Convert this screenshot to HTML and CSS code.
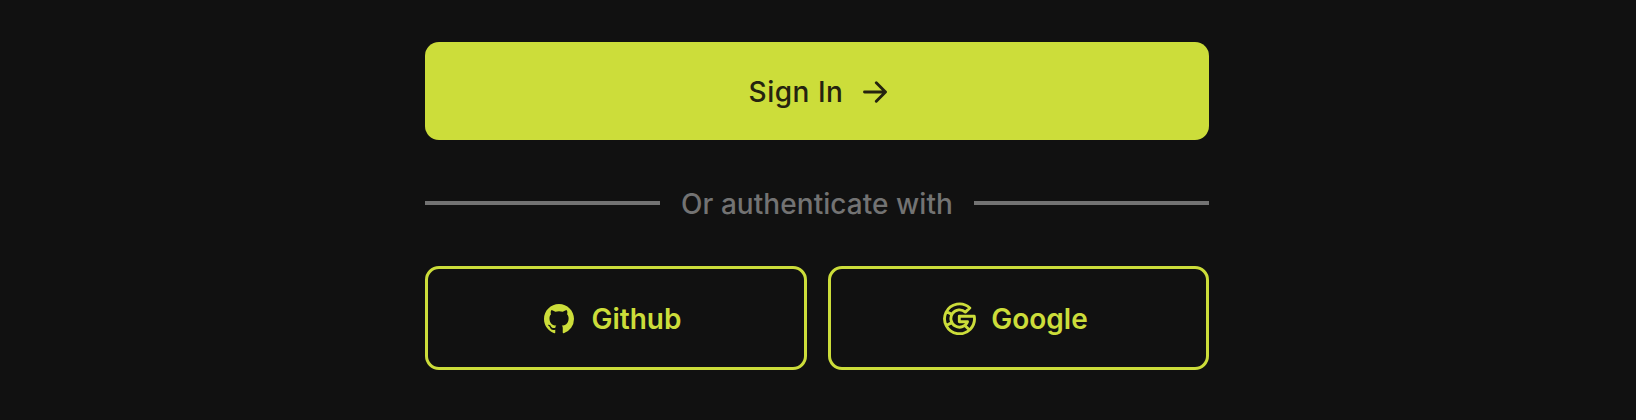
FILE: index.html
```html
<!DOCTYPE html>
<html lang="en">
<head>
<meta charset="utf-8">
<title>Sign In</title>
<link rel="stylesheet" href="styles.css">
</head>
<body>
<main class="auth">
  <button class="btn btn-primary" type="button">
    <span class="label label-signin">Sign In</span>
    <svg class="arrow" viewBox="0 0 24 22" fill="none" stroke="currentColor" stroke-width="2.9" stroke-linecap="round" stroke-linejoin="round"><path d="M1.5 11H22.4M13.3 1.8l9.2 9.2-9.2 9.2"/></svg>
  </button>
  <div class="divider"><span class="label label-divider">Or authenticate with</span></div>
  <div class="providers">
    <button class="btn btn-outline btn-github" type="button">
      <svg class="github" viewBox="0 0 16 16" fill="currentColor"><path d="M8 0C3.58 0 0 3.58 0 8c0 3.54 2.29 6.53 5.47 7.59.4.07.55-.17.55-.38 0-.19-.01-.82-.01-1.49-2.01.37-2.53-.49-2.69-.94-.09-.23-.48-.94-.82-1.13-.28-.15-.68-.52-.01-.53.63-.01 1.08.58 1.23.82.72 1.21 1.87.87 2.33.66.07-.52.28-.87.51-1.07-1.78-.2-3.64-.89-3.64-3.95 0-.87.31-1.59.82-2.15-.08-.2-.36-1.02.08-2.12 0 0 .67-.21 2.2.82.64-.18 1.32-.27 2-.27s1.36.09 2 .27c1.53-1.04 2.2-.82 2.2-.82.44 1.1.16 1.92.08 2.12.51.56.82 1.27.82 2.15 0 3.07-1.87 3.75-3.65 3.95.29.25.54.73.54 1.48 0 1.07-.01 1.93-.01 2.2 0 .21.15.46.55.38A8.01 8.01 0 0 0 16 8c0-4.42-3.58-8-8-8z"/></svg>
      <span class="label label-github">Github</span>
    </button>
    <button class="btn btn-outline btn-google" type="button">
      <svg class="google" viewBox="0 0 32 32" fill="none" stroke="currentColor" stroke-width="2.8" stroke-linejoin="round" stroke-linecap="round"><path d="M26 5.8A14.5 14.5 0 1 0 30.3 13.8H15.8V19.2H23.8A8.4 8.4 0 1 1 21.7 9.8ZM3.6 9.4L8.6 12M3.6 22.6L8.6 20M21.2 22.8L25.2 26.6"/></svg>
      <span class="label label-google">Google</span>
    </button>
  </div>
</main>
</body>
</html>
```
FILE: styles.css
```css
* { box-sizing: border-box; }
body {
  margin: 0;
  min-height: 420px;
  background: #111111;
  font-family: Inter, "Liberation Sans", sans-serif;
}
.auth {
  width: 784px;
  margin-left: 425px;
  padding-top: 42px;
  display: flex;
  flex-direction: column;
}
.btn {
  display: flex;
  align-items: center;
  justify-content: center;
  border-radius: 14px;
  font: inherit;
  padding: 0;
  margin: 0;
}
.btn svg { flex: none; }
.label { font-size: 28px; line-height: 34px; font-weight: 500; white-space: nowrap; }
.btn-primary { height: 98px; border: 0; padding: 1px 0 0 2px; background: #ccdd3a; color: #25230f; gap: 20px; }
.label-signin { letter-spacing: 0.5px; }
.arrow { width: 24px; height: 22px; }
.divider {
  height: 34px;
  margin: 46px 0;
  display: flex;
  align-items: center;
  justify-content: center;
  gap: 20px;
  color: #737373;
}
.divider::before, .divider::after { content: ""; width: 235px; height: 4px; background: #737373; flex: none; }
.label-divider { flex: 1; text-align: center; letter-spacing: 0.05px; padding-top: 1px; }
.providers { display: grid; grid-template-columns: 382px 381px; gap: 21px; }
.btn-outline { height: 104px; border: 3px solid #ccdd3a; background: transparent; color: #ccdd3a; padding: 1px 6px 0 0; }
.btn-outline .label { font-weight: 600; }
.btn-github { gap: 17px; }
.btn-google { gap: 15px; }
.github { width: 30px; height: 30px; }
.google { width: 33px; height: 33px; }
```
